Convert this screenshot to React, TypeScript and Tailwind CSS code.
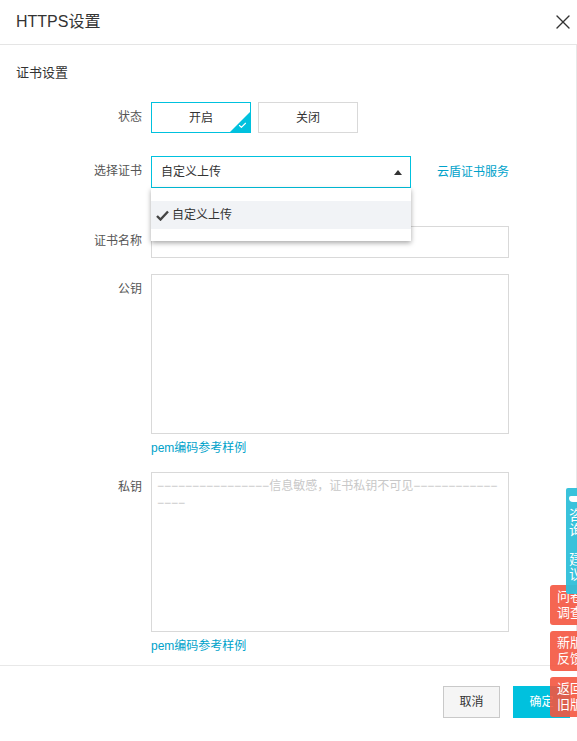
import { X, Check } from "lucide-react";

const font = { fontFamily: '"Liberation Sans", "Noto Sans CJK SC", sans-serif' };

function Row({ label, children, className = "" }: { label: string; children: React.ReactNode; className?: string }) {
  return (
    <div className={`flex ${className}`}>
      <div className="w-[142px] shrink-0 text-right text-[12px] leading-[30px] text-[#555]">{label}</div>
      <div className="ml-[9px] flex-1">{children}</div>
    </div>
  );
}

export default function App() {
  const dashes = "−".repeat(16);
  return (
    <div className="relative w-[577px] h-[741px] overflow-hidden bg-white text-[#333]" style={font}>
      {/* Header */}
      <div className="h-[45px] flex items-center justify-between pl-4 pr-[2px] border-b border-[#e5e5e5]">
        <span className="text-[16px] text-[#333]">HTTPS设置</span>
        <X size={24} strokeWidth={1.4} className="text-[#333]" />
      </div>

      {/* Body */}
      <div className="h-[620px] border-r border-[#e8e8e8] pt-[18px]">
        <div className="pl-4 text-[13px] leading-[20px] text-[#333]">证书设置</div>

        <Row label="状态" className="mt-[19px]">
          <div className="flex gap-[7px]">
            <div className="relative w-[100px] h-[31px] border border-[#00c1de] flex items-center justify-center text-[12px] text-[#333]">
              开启
              <div className="absolute right-0 bottom-0 w-0 h-0 border-l-[20px] border-l-transparent border-b-[20px] border-b-[#00c1de]" />
              <Check size={9} strokeWidth={3} className="absolute right-[3px] bottom-[2px] text-white" />
            </div>
            <div className="w-[100px] h-[31px] border border-[#d9d9d9] flex items-center justify-center text-[12px] text-[#333]">
              关闭
            </div>
          </div>
        </Row>

        <Row label="选择证书" className="mt-[23px]">
          <div className="flex items-center">
            <div className="relative w-[260px]">
              <div className="h-[32px] border border-[#00c1de] flex items-center justify-between pl-[9px] pr-[8px] text-[12px] text-[#333]">
                <span>自定义上传</span>
                <span className="w-0 h-0 border-l-[4px] border-l-transparent border-r-[4px] border-r-transparent border-b-[5px] border-b-[#333]" />
              </div>
              {/* dropdown */}
              <div className="absolute left-0 top-[32px] z-10 w-[260px] h-[53px] bg-white shadow-[0_2px_5px_rgba(0,0,0,0.35)] pt-[13px]">
                <div className="h-[28px] bg-[#f1f3f6] flex items-center pl-[5px] text-[12px] text-[#333]">
                  <svg width="13" height="11" viewBox="0 0 13 11" className="mr-[3px]">
                    <path d="M1 6 L4.5 9.5 L12 1.5" fill="none" stroke="#444" strokeWidth="2.4" />
                  </svg>
                  自定义上传
                </div>
              </div>
            </div>
            <span className="ml-[26px] text-[12px] text-[#00a2ca]">云盾证书服务</span>
          </div>
        </Row>

        <Row label="证书名称" className="mt-[38px]">
          <div className="w-[358px] h-[32px] border border-[#d9d9d9]" />
        </Row>

        <Row label="公钥" className="mt-[16px]">
          <textarea className="block w-[358px] h-[160px] border border-[#d9d9d9] resize-none outline-none" />
          <div className="mt-[4px] text-[12px] leading-[20px] text-[#00a2ca]">pem编码参考样例</div>
        </Row>

        <Row label="私钥" className="mt-[14px]">
          <textarea
            className="block w-[358px] h-[160px] border border-[#d9d9d9] resize-none outline-none px-[5px] py-[5px] text-[12px] leading-[17px] break-all placeholder:text-[#c8c8c8]"
            placeholder={`${dashes}信息敏感，证书私钥不可见${dashes}`}
          />
          <div className="mt-[4px] text-[12px] leading-[20px] text-[#00a2ca]">pem编码参考样例</div>
        </Row>
      </div>

      {/* Footer */}
      <div className="border-t border-[#e8e8e8] pt-[20px] pr-[7px] flex justify-end gap-[13px]">
        <button className="w-[57px] h-[32px] border border-[#c9c9c9] bg-[#f5f5f5] text-[12px] text-[#333]">取消</button>
        <button className="w-[57px] h-[32px] bg-[#00c1de] text-[12px] text-white">确定</button>
      </div>

      {/* Floating feedback tabs */}
      <div className="absolute left-[550px] top-[585px] w-[40px] h-[40px] rounded-l-[3px] bg-[#f4553f]/90 pl-[7px] pt-[4px] text-[13px] leading-[16px] text-white">
        问卷<br />调查
      </div>
      <div className="absolute left-[550px] top-[631px] w-[40px] h-[40px] rounded-l-[3px] bg-[#f4553f]/90 pl-[7px] pt-[4px] text-[13px] leading-[16px] text-white">
        新版<br />反馈
      </div>
      <div className="absolute left-[550px] top-[677px] w-[40px] h-[40px] rounded-l-[3px] bg-[#f4553f]/90 pl-[7px] pt-[4px] text-[13px] leading-[16px] text-white">
        返回<br />旧版
      </div>
      <div className="absolute left-[566px] top-[488px] w-[24px] h-[106px] rounded-l-[2px] bg-[#2ebfd9]/95 pt-[8px] pl-[3px] text-white">
        <div className="w-[12px] h-[6px] bg-white rounded-t-[2px] rounded-b-[4px]" />
        <div className="mt-[6px] text-[14px] leading-[15px] w-[14px]">咨<br />询</div>
        <div className="mt-[14px] text-[14px] leading-[15px] w-[14px]">建<br />议</div>
      </div>
    </div>
  );
}
